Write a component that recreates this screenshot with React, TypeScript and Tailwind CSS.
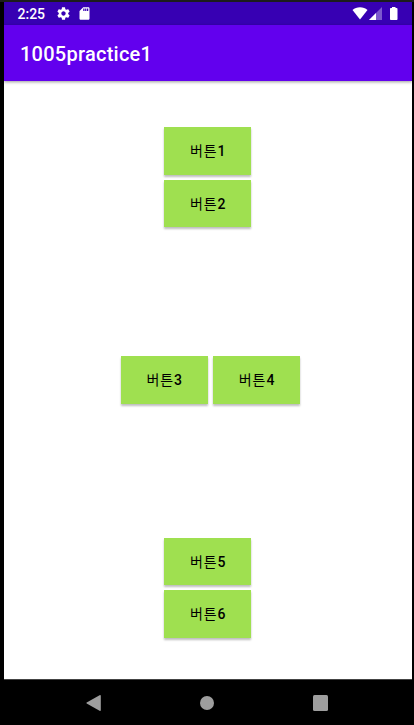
import React from "react";

function GreenButton({ label, digit }: { label: string; digit: string }) {
  return (
    <button
      type="button"
      className="flex h-[47.5px] w-[87.4px] items-center justify-center bg-[#9fe050] text-[14px] leading-none text-black shadow-[0_1.5px_2px_rgba(0,0,0,0.26)]"
    >
      <span className="pb-[1px] font-['Noto_Sans_CJK_KR',sans-serif] font-normal tracking-[0.9px]">{label}</span>
      <span className="pt-[1px] font-[Roboto,sans-serif] font-medium">{digit}</span>
    </button>
  );
}

function StatusBar() {
  return (
    <div className="flex h-[23px] items-center bg-[#3700b3] pl-[13.5px] text-white">
      <span className="w-[38px] pt-px font-[Roboto,sans-serif] text-[14px] font-medium leading-none">2:25</span>
      <svg className="h-[15px] w-[15px]" viewBox="0 0 24 24" fill="currentColor">
        <path d="M19.43 12.98c.04-.32.07-.64.07-.98s-.03-.66-.07-.98l2.11-1.65c.19-.15.24-.42.12-.64l-2-3.46c-.12-.22-.39-.3-.61-.22l-2.49 1c-.52-.4-1.08-.73-1.69-.98l-.38-2.65A.49.49 0 0 0 14 2h-4c-.25 0-.46.18-.49.42l-.38 2.65c-.61.25-1.17.59-1.69.98l-2.49-1c-.23-.09-.49 0-.61.22l-2 3.46c-.13.22-.07.49.12.64l2.11 1.65c-.04.32-.07.65-.07.98s.03.66.07.98l-2.11 1.65c-.19.15-.24.42-.12.64l2 3.46c.12.22.39.3.61.22l2.49-1c.52.4 1.08.73 1.69.98l.38 2.65c.03.24.24.42.49.42h4c.25 0 .46-.18.49-.42l.38-2.65c.61-.25 1.17-.59 1.69-.98l2.49 1c.23.09.49 0 .61-.22l2-3.46c.12-.22.07-.49-.12-.64l-2.11-1.65zM12 15.5c-1.93 0-3.5-1.57-3.5-3.5s1.57-3.5 3.5-3.5 3.5 1.57 3.5 3.5-1.57 3.5-3.5 3.5z" />
      </svg>
      <svg className="ml-[6.5px] h-[15px] w-[15px]" viewBox="0 0 24 24" fill="currentColor">
        <path d="M18 2h-8L4.02 8 4 20c0 1.1.9 2 2 2h12c1.1 0 2-.9 2-2V4c0-1.1-.9-2-2-2zm-6 6h-2V4h2v4zm3 0h-2V4h2v4zm3 0h-2V4h2v4z" />
      </svg>
      <div className="ml-auto flex items-center pr-[14px]">
        <svg className="h-[13px] w-4" viewBox="0 0 16 13" fill="currentColor">
          <path d="M8 12.6.5 2.9C2.5 1.2 5.1.3 8 .3s5.5.9 7.5 2.6z" />
        </svg>
        <svg className="ml-[1px] h-[13px] w-[13px]" viewBox="0 0 13 13" fill="currentColor">
          <path d="M13 0v13H0z" opacity=".35" />
          <path d="M7 6v7H0z" />
        </svg>
        <svg className="ml-[8px] h-[13px] w-[8px]" viewBox="0 0 8 13" fill="currentColor">
          <path d="M2 0h3.5v1h1.2c.4 0 .8.4.8.8v10.4c0 .4-.4.8-.8.8H.8c-.4 0-.8-.4-.8-.8V1.8c0-.4.4-.8.8-.8H2z" />
        </svg>
      </div>
    </div>
  );
}

function NavigationBar() {
  return (
    <nav className="flex h-[46px] items-center border-t border-[#444] bg-black pl-[82px] text-[#9e9e9e]">
      <svg className="h-4 w-[15px]" viewBox="0 0 15 16" fill="currentColor">
        <path d="M14 0q.8 0 .8.8v14.4q0 .8-.8.8L.7 8.5q-.7-.5 0-1z" />
      </svg>
      <span className="ml-[99px] h-[14px] w-[14px] rounded-full bg-current" />
      <span className="ml-[99px] h-4 w-[15px] rounded-[1.5px] bg-current" />
    </nav>
  );
}

export default function App() {
  return (
    <div className="h-[725px] w-[414px] bg-black pl-1 pr-0.5">
      <div className="-mr-0.5 -ml-1 h-0.5 bg-[#1c1c1c]" />
      <StatusBar />
      <header className="relative flex h-14 items-center bg-[#6200ee] pl-4 pt-[2px] shadow-[0_1px_3px_rgba(0,0,0,0.4)]">
        <h1 className="font-[Roboto,sans-serif] text-[20px] font-medium leading-none tracking-[0.25px] text-white">1005practice1</h1>
      </header>
      <main className="flex h-[598px] flex-col bg-white pt-[46px]">
        <section className="flex flex-col gap-[5px] pl-[160px]">
          <GreenButton label="버튼" digit="1" />
          <GreenButton label="버튼" digit="2" />
        </section>
        <section className="mt-[129px] flex gap-[5px] pl-[116.5px]">
          <GreenButton label="버튼" digit="3" />
          <GreenButton label="버튼" digit="4" />
        </section>
        <section className="mt-[134px] flex flex-col gap-[5px] pl-[160px]">
          <GreenButton label="버튼" digit="5" />
          <GreenButton label="버튼" digit="6" />
        </section>
      </main>
      <NavigationBar />
    </div>
  );
}
